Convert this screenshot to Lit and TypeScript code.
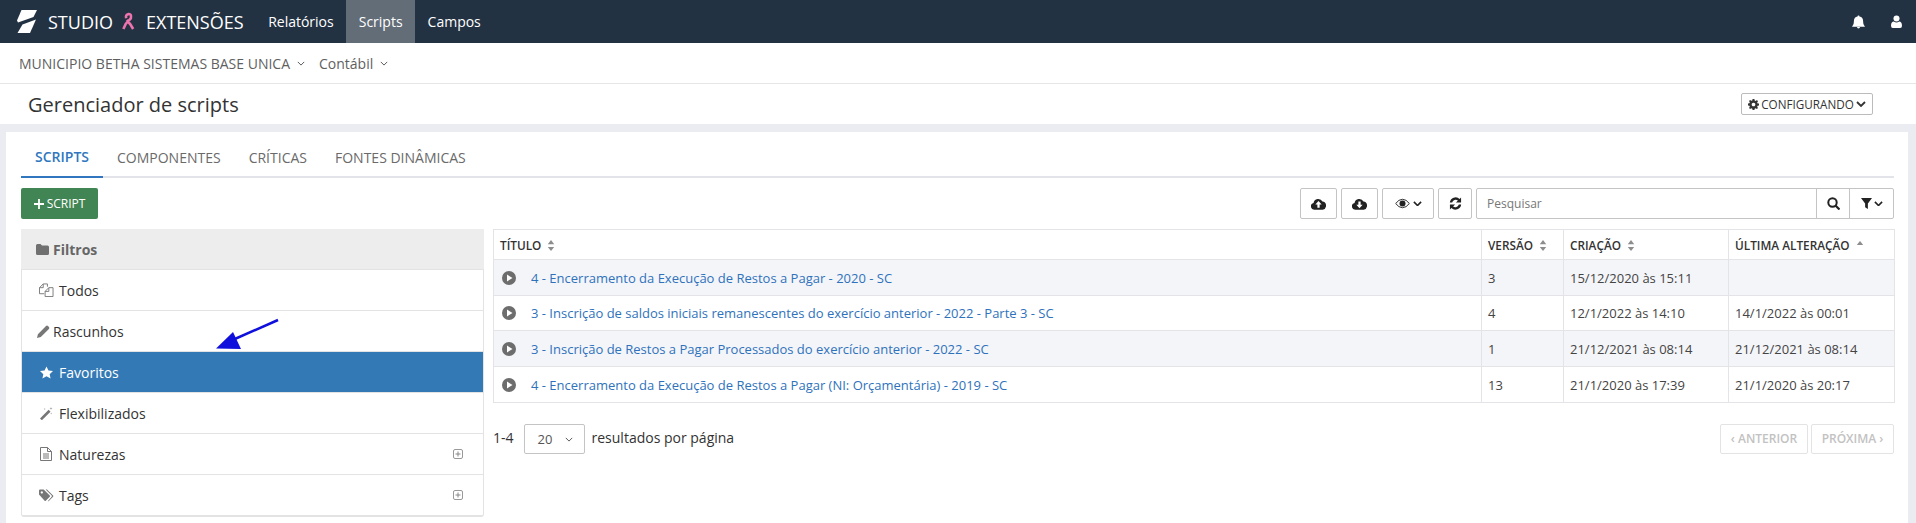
import { LitElement, html, css } from "lit";
import { customElement } from "lit/decorators.js";

const cloudUp = html`<svg viewBox="0 0 20 16" width="15" height="12"><path fill="currentColor" d="M4.500 15.500A4.500 4.500 0 0 1 3.400 6.600 6.300 6.300 0 0 1 15.300 4.800 5.400 5.400 0 0 1 15.500 15.500Z"/><path fill="#fff" d="M10 4l4.200 4.500h-2.700V13h-3V8.500H5.800Z"/></svg>`;
const cloudDown = html`<svg viewBox="0 0 20 16" width="15" height="12"><path fill="currentColor" d="M4.500 15.500A4.500 4.500 0 0 1 3.400 6.600 6.300 6.300 0 0 1 15.300 4.800 5.400 5.400 0 0 1 15.500 15.500Z"/><path fill="#fff" d="M10 13.500l4.200-4.500h-2.700V4.500h-3V9H5.800Z"/></svg>`;
const chev = (w = 9) => html`<svg viewBox="0 0 10 6" width=${w} height=${w * 0.6}><path fill="none" stroke="currentColor" stroke-width="1.800" d="M1 1l4 4 4-4"/></svg>`;
const thinChev = html`<svg viewBox="0 0 10 6" width="8" height="5"><path fill="none" stroke="#555" stroke-width="1.200" d="M1 1l4 4 4-4"/></svg>`;
const sort = html`<svg viewBox="0 0 8 12" width="8" height="11"><path fill="#8d8d8d" d="M4 0l3.500 4.500h-7ZM4 12L.5 7.500h7Z"/></svg>`;
const sortUp = html`<svg viewBox="0 0 8 12" width="8" height="11"><path fill="#8d8d8d" d="M4 1l3.500 4.500h-7Z"/></svg>`;
const play = html`<svg viewBox="0 0 14 14" width="14" height="14"><circle cx="7" cy="7" r="7" fill="#6d6d6d"/><path fill="#fff" d="M5 3.500l5.500 3.500L5 10.500Z"/></svg>`;
const plusBox = html`<svg class="plusbox" viewBox="0 0 10 10" width="10" height="10"><rect x=".5" y=".5" width="9" height="9" rx="1.500" fill="none" stroke="#999"/><path stroke="#888" d="M2.500 5h5M5 2.500v5"/></svg>`;

const icons: Record<string, unknown> = {
  todos: html`<svg viewBox="0 0 16 15" width="15" height="14"><g fill="none" stroke="#777"><path d="M5.500 11.500H.5V5L4.500 1H9v3"/><path d="M4.500 1v4H.5"/><path d="M6.500 9 10.500 5H15v9.500H6.500Z" fill="#fff"/><path d="M10.500 5v4h-4"/></g></svg>`,
  rascunhos: html`<svg viewBox="0 0 13 13" width="13" height="13"><path fill="#777" d="M0 13l.9-3.800L9 1.100q1-1 2 0l.9.9q1 1 0 2L3.800 12.100Z"/></svg>`,
  favoritos: html`<svg viewBox="0 0 14 13" width="13" height="13"><path fill="#fff" d="M7 0l2.100 4.400 4.900.6-3.600 3.300 1 4.700L7 10.600 2.600 13l1-4.700L0 5l4.900-.6Z"/></svg>`,
  flex: html`<svg viewBox="0 0 14 14" width="13" height="13"><path fill="#777" d="M0 12.300 9.300 3l2 2L2 14.300Z"/><path fill="#aaa" d="M11.800 0l.5 1.200 1.200.4-1.200.5-.5 1.200-.4-1.200-1.200-.5 1.200-.4ZM5 1l.4.800.8.300-.8.300-.4.800-.3-.8-.8-.3.800-.3ZM12 6l.4.800.8.300-.8.300-.4.800-.3-.8-.8-.3.800-.3Z"/></svg>`,
  naturezas: html`<svg viewBox="0 0 12 14" width="12" height="14"><path fill="none" stroke="#777" d="M.5.5h7l4 4v9H.5ZM7.500.5v4h4M3 7h6M3 9h6M3 11h6"/></svg>`,
  tags: html`<svg viewBox="0 0 16 13" width="15" height="13"><path fill="#777" d="M0 1.200Q0 0 1.200 0H5l6.500 6.500q.6.600 0 1.200L7.200 12q-.6.600-1.200 0L0 5.500ZM3 2a1.200 1.200 0 1 0 .01 0Z"/><path fill="#777" d="M7 0h1.500L15 6.500q.6.600 0 1.200L10.500 12.300q-.5.500-1.200.2L13.500 7.700q.6-.6 0-1.200Z"/></svg>`,
};

const rows = [
  ["4 - Encerramento da Execução de Restos a Pagar - 2020 - SC", "3", "15/12/2020 às 15:11", ""],
  ["3 - Inscrição de saldos iniciais remanescentes do exercício anterior - 2022 - Parte 3 - SC", "4", "12/1/2022 às 14:10", "14/1/2022 às 00:01"],
  ["3 - Inscrição de Restos a Pagar Processados do exercício anterior - 2022 - SC", "1", "21/12/2021 às 08:14", "21/12/2021 às 08:14"],
  ["4 - Encerramento da Execução de Restos a Pagar (NI: Orçamentária) - 2019 - SC", "13", "21/1/2020 às 17:39", "21/1/2020 às 20:17"],
];

const filters = [
  ["todos", "Todos", false, false, false],
  ["rascunhos", "Rascunhos", false, false, true],
  ["favoritos", "Favoritos", true, false, false],
  ["flex", "Flexibilizados", false, false, false],
  ["naturezas", "Naturezas", false, true, false],
  ["tags", "Tags", false, true, false],
] as const;

@customElement("app-root")
export class AppRoot extends LitElement {
  static styles = css`
    :host { display: block; position: relative; height: 523px; overflow: hidden; background: #ebecf1; font-family: "Open Sans", sans-serif; color: #333; font-size: 14px; }
    svg { display: block; flex: none; }
    .top { height: 43px; background: #233243; display: flex; align-items: center; color: #fff; }
    .logo { margin-left: 17px; }
    .brand { font-size: 18px; margin-left: 11px; }
    .brand.second { margin-left: -1px; }
    .ribbon { margin: 0 12px 0 9px; }
    .nav { display: flex; margin-left: 12px; height: 43px; }
    .nav span { padding: 0 12.500px; display: flex; align-items: center; font-size: 14px; font-weight: 500; }
    .nav .on { background: #626d78; }
    .top-right { margin-left: auto; margin-right: 14px; display: flex; gap: 26px; align-items: center; }
    .sub { height: 40px; background: #fff; border-bottom: 1px solid #e6e6e6; display: flex; align-items: center; padding-left: 19px; color: #5f5f5f; font-size: 14px; gap: 7px; }
    .sub .gap { margin-left: 7px; }
    .title { height: 40px; background: #fff; display: flex; align-items: center; padding: 0 43px 0 28px; justify-content: space-between; }
    .title h1 { margin: 0; font-size: 20px; font-weight: 400; color: #333; }
    .cfg { height: 22px; box-sizing: border-box; width: 132px; border: 1px solid #bbb; border-radius: 2px; display: flex; align-items: center; justify-content: center; gap: 2px; font-size: 11.700px; color: #333; }
    .card { background: #fff; margin: 8px 8px 0 6px; height: 391px; padding: 0 14px 0 15px; box-sizing: border-box; }
    .tabs { display: flex; height: 44px; border-bottom: 2px solid #e3e4ea; }
    .tabs span { padding: 4px 14px 0; margin-bottom: -2px; display: flex; align-items: center; font-size: 14px; color: #6a6a6a; }
    .tabs .on { color: #3077c0; font-weight: 600; border-bottom: 2px solid #3077c0; padding-bottom: 0; }
    .toolbar { display: flex; margin-top: 10px; height: 31px; }
    .add { width: 77px; height: 31px; box-sizing: border-box; background: #428554; color: #fff; border-radius: 2px; display: flex; align-items: center; justify-content: center; gap: 3px; font-size: 12px; }
    .tools { margin-left: auto; display: flex; gap: 4px; }
    .btn { height: 31px; box-sizing: border-box; border: 1px solid #c4c4c4; border-radius: 2px; display: flex; align-items: center; justify-content: center; gap: 3px; color: #222; background: #fff; }
    .w37 { width: 37px; } .w52 { width: 52px; } .w34 { width: 34px; }
    .search { width: 418px; height: 31px; box-sizing: border-box; border: 1px solid #c4c4c4; border-radius: 2px; display: flex; align-items: stretch; font-size: 12px; color: #777; }
    .search .ph { flex: 1; padding-left: 10px; display: flex; align-items: center; }
    .search .cell { width: 32px; border-left: 1px solid #c4c4c4; display: flex; align-items: center; justify-content: center; color: #222; gap: 2px; }
    .search .cell.f { width: 43px; }
    .main { display: flex; margin-top: 10px; gap: 9px; }
    .panel { width: 463px; flex: none; box-sizing: border-box; border: 1px solid #e3e3e3; border-radius: 3px; border-top: none; }
    .phead { height: 41px; background: #ededee; display: flex; align-items: center; padding-left: 15px; gap: 4px; font-weight: 700; color: #666; font-size: 14px; border-bottom: 1px solid #e3e3e3; box-sizing: border-box; margin: 0 -1px; }
    .fitem { height: 41px; box-sizing: border-box; border-bottom: 1px solid #e3e3e3; display: flex; align-items: center; padding: 0 15px 0 16px; gap: 5px; font-size: 14px; color: #333; }
    .fitem.d .ico { width: 12px; margin-left: -1px; margin-right: -1px; }
    .ico { width: 16px; display: flex; justify-content: center; flex: none; }
    .fitem.on { background: #3379b5; color: #fff; }
    .fitem .plusbox { margin-left: auto; margin-right: 5px; }
    .side { flex: 1; min-width: 0; }
    table { border-collapse: collapse; table-layout: fixed; width: 1401px; font-size: 13px; }
    th, td { border: 1px solid #e3e3e8; padding: 0 6px; text-align: left; height: 36px; box-sizing: border-box; white-space: nowrap; overflow: hidden; color: #444; }
    tbody tr:nth-child(2) td { height: 35px; }
    th { height: 30px; font-size: 11.800px; font-weight: 600; color: #333; }
    th svg { display: inline-block; margin-left: 6px; vertical-align: -1px; }
    tbody tr:nth-child(odd) td { background: #f4f5f9; }
    td a { color: #2f72bc; }
    .c1 { width: 988px; } .c2 { width: 82px; } .c3 { width: 165px; } .c4 { width: 166px; }
    .tc { display: flex; align-items: center; gap: 15px; padding-left: 2px; }
    .pager { display: flex; align-items: center; margin-top: 21px; font-size: 14px; color: #333; }
    .lbl { padding-bottom: 3px; }
    .sel { width: 61px; height: 30px; box-sizing: border-box; border: 1px solid #c4c4c4; border-radius: 2px; margin: 0 7px 0 10px; display: flex; align-items: center; padding-left: 13px; gap: 13px; font-size: 13px; color: #555; }
    .pg { margin-left: auto; display: flex; gap: 3px; }
    .pg span { height: 30px; box-sizing: border-box; border: 1px solid #e3e3e3; border-radius: 2px; padding-bottom: 2px; display: flex; align-items: center; justify-content: center; font-size: 12px; color: #c2c2c2; font-weight: 600; width: 88px; }
    .pg span + span { width: 83px; }
    .arrow { position: absolute; left: 210px; top: 314px; }
  `;

  render() {
    return html`
      <div class="top">
        <svg class="logo" viewBox="0 0 20 23" width="20" height="23"><path fill="#fff" d="M4.500 0H20l-3.500 7L1 12.500 0 10.500Z"/><path fill="#fff" d="M19 9.500 13 23H.5l5-8.500Z"/></svg>
        <span class="brand">STUDIO</span>
        <svg class="ribbon" viewBox="0 0 14 20" width="13" height="20"><path fill="none" stroke="#ee74ae" stroke-width="2.800" d="M4.500 6Q3.500 2 7 1.500T9.500 6L4 12 1.500 17.500M5 8l4 4.500 3 5"/></svg>
        <span class="brand second">EXTENSÕES</span>
        <div class="nav"><span>Relatórios</span><span class="on">Scripts</span><span>Campos</span></div>
        <div class="top-right">
          <svg viewBox="0 0 14 14" width="13" height="14"><path fill="#fff" d="M7 0a1 1 0 0 1 1 1.200Q12 2 12 6.500c0 3 .8 4 2 5.500H0c1.200-1.500 2-2.500 2-5.500Q2 2 6 1.200A1 1 0 0 1 7 0ZM5.400 12.500h3.200a1.600 1.500 0 0 1-3.200 0Z"/></svg>
          <svg viewBox="0 0 12 14" width="11" height="13"><circle cx="6" cy="3.800" r="3.300" fill="#fff"/><path fill="#fff" d="M0 11.500C0 8.500 1.500 7 3 7q3 2 6 0c1.500 0 3 1.500 3 4.500Q12 14 10 14H2Q0 14 0 11.500Z"/></svg>
        </div>
      </div>
      <div class="sub"><span>MUNICIPIO BETHA SISTEMAS BASE UNICA</span>${thinChev}<span class="gap">Contábil</span>${thinChev}</div>
      <div class="title"><h1>Gerenciador de scripts</h1>
        <div class="cfg"><svg viewBox="0 0 12 12" width="11" height="11"><path fill="#333" fill-rule="evenodd" d="M5 0h2l.3 1.600 1.100.5L9.800 1.200l1.100 1.200-.9 1.300.5 1.100L12 5v2l-1.500.3-.5 1.100.9 1.400-1.200 1.100-1.300-.9-1.100.5L7 12H5l-.3-1.500-1.100-.5-1.300.9-1.200-1.200.9-1.300-.5-1.100L0 7V5l1.500-.3.500-1.100-.9-1.300L2.300 1.100l1.300.9 1.100-.5ZM6 4a2 2 0 1 0 .01 0Z"/></svg>CONFIGURANDO${chev(10)}</div>
      </div>
      <div class="card">
        <div class="tabs"><span class="on">SCRIPTS</span><span>COMPONENTES</span><span>CRÍTICAS</span><span>FONTES DINÂMICAS</span></div>
        <div class="toolbar">
          <div class="add"><svg viewBox="0 0 10 10" width="10" height="10"><path stroke="#fff" stroke-width="1.800" d="M5 0v10M0 5h10"/></svg>SCRIPT</div>
          <div class="tools">
            <div class="btn w37">${cloudUp}</div>
            <div class="btn w37">${cloudDown}</div>
            <div class="btn w52"><svg viewBox="0 0 16 11" width="15" height="11"><path fill="none" stroke="#222" d="M.7 5.500Q4 1 8 1t7.300 4.500Q12 10 8 10T.7 5.500Z"/><circle cx="8" cy="5.500" r="3.200" fill="#222"/></svg>${chev()}</div>
            <div class="btn w34"><svg viewBox="0 0 14 14" width="13" height="13"><path fill="#222" d="M13 .5V6H7.500l2.100-2.100A3.900 3.900 0 0 0 3.400 6H.9A6.300 6.300 0 0 1 11.400 2.100ZM1 13.500V8h5.500l-2.100 2.100A3.900 3.900 0 0 0 10.600 8h2.500A6.300 6.300 0 0 1 2.600 11.900Z"/></svg></div>
            <div class="search">
              <div class="ph">Pesquisar</div>
              <div class="cell"><svg viewBox="0 0 13 13" width="13" height="13"><circle cx="5.500" cy="5.500" r="4.200" fill="none" stroke="#222" stroke-width="2"/><path stroke="#222" stroke-width="2.200" d="M8.500 8.500l4 4"/></svg></div>
              <div class="cell f"><svg viewBox="0 0 12 12" width="11" height="11"><path fill="#222" d="M0 0h12L7.500 6v6L4.500 10V6Z"/></svg>${chev()}</div>
            </div>
          </div>
        </div>
        <div class="main">
          <div class="panel">
            <div class="phead"><svg viewBox="0 0 13 11" width="13" height="11"><path fill="#707070" d="M0 1.500Q0 0 1.500 0h3L6 1.500h5.500Q13 1.500 13 3v6.500Q13 11 11.500 11h-10Q0 11 0 9.500Z"/></svg>Filtros</div>
            ${filters.map(([k, label, on, plus, d]) => html`
              <div class="fitem ${on ? "on" : ""} ${d ? "d" : ""}"><div class="ico">${icons[k]}</div><span>${label}</span>${plus ? plusBox : ""}</div>`)}
          </div>
          <div class="side">
            <table>
              <colgroup><col class="c1"><col class="c2"><col class="c3"><col class="c4"></colgroup>
              <thead><tr><th>TÍTULO${sort}</th><th>VERSÃO${sort}</th><th>CRIAÇÃO${sort}</th><th>ÚLTIMA ALTERAÇÃO${sortUp}</th></tr></thead>
              <tbody>${rows.map(r => html`<tr><td><div class="tc">${play}<a>${r[0]}</a></div></td><td>${r[1]}</td><td>${r[2]}</td><td>${r[3]}</td></tr>`)}</tbody>
            </table>
            <div class="pager"><span class="lbl">1-4</span><div class="sel"><span>20</span>${thinChev}</div><span class="lbl">resultados por página</span>
              <div class="pg"><span>‹ ANTERIOR</span><span>PRÓXIMA ›</span></div>
            </div>
          </div>
        </div>
      </div>
      <svg class="arrow" viewBox="0 0 72 40" width="72" height="40"><path stroke="#1010dc" stroke-width="2.500" d="M68 6L18 28"/><path fill="#1010dc" d="M6 34.500L23 18l8 17Z"/></svg>
    `;
  }
}
